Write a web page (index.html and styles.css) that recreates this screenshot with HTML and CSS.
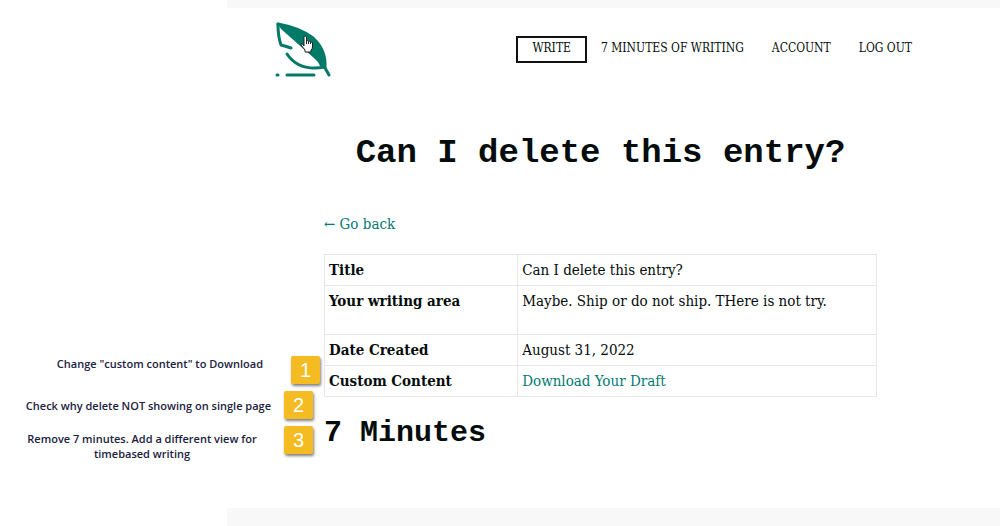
FILE: index.html
```html
<!DOCTYPE html>
<html lang="en">
<head>
    <meta charset="UTF-8">
    <meta name="viewport" content="width=device-width, initial-scale=1.0">
    <title>Can I delete this entry?</title>
    <link rel="stylesheet" href="styles.css">
</head>
<body>
    <div class="site">
        <header class="site-header">
            <a class="logo" href="#" aria-label="Home">
                <svg width="58" height="58" viewBox="0 0 58 58">
                    <!-- leaf -->
                    <path d="M3 3 Q25 7 38 17 Q51 29 50 46 L45 45 Q44 41 40 38 L6 8 Z" fill="#037a68"/>
                    <g fill="none" stroke="#037a68" stroke-width="3" stroke-linecap="round" stroke-linejoin="round">
                        <path d="M3 3 Q25 7 38 17 Q51 29 50 46 Q24 51 12 33"/>
                        <path d="M3 3 Q3 16 6 24 Q10 25 16 27"/>
                        <path d="M49 45 L54 54"/>
                        <path d="M2 54 H3 M12 54 H39"/>
                    </g>
                </svg>
                <svg class="cursor" width="14" height="18" viewBox="0 0 14 18">
                    <path d="M4 11V2Q4 1 5 1T6.500 2V6Q8 5 8.500 6.500Q10 5.500 10.500 7Q12.500 6.500 12.500 8V12Q12.500 14 11 15V17H5V15L1 10Q.5 8.500 2 8.500Z" fill="#fff" stroke="#222" stroke-width="1"/>
                    <path d="M6.500 6V9M8.500 6.500V9M10.500 7V9" stroke="#222" fill="none"/>
                </svg>
            </a>
            <nav class="menu">
                <a class="menu-button" href="#">WRITE</a>
                <a href="#">7 MINUTES OF WRITING</a>
                <a href="#">ACCOUNT</a>
                <a href="#">LOG OUT</a>
            </nav>
        </header>

        <main class="entry">
            <h1>Can I delete this entry?</h1>
            <a class="back" href="#">← Go back</a>
            <table>
                <tr>
                    <th scope="row">Title</th>
                    <td>Can I delete this entry?</td>
                </tr>
                <tr class="writing">
                    <th scope="row">Your writing area</th>
                    <td>Maybe. Ship or do not ship. THere is not try.</td>
                </tr>
                <tr>
                    <th scope="row">Date Created</th>
                    <td>August 31, 2022</td>
                </tr>
                <tr>
                    <th scope="row">Custom Content</th>
                    <td><a href="#">Download Your Draft</a></td>
                </tr>
            </table>
            <h2>7 Minutes</h2>
        </main>
    </div>

    <!-- review notes -->
    <ol class="notes">
        <li class="note-out"><p>Change "custom content" to Download</p><span class="badge">1</span></li>
        <li><p>Check why delete NOT showing on single page</p><span class="badge">2</span></li>
        <li class="note-long"><p>Remove 7 minutes. Add a different view for timebased writing</p><span class="badge">3</span></li>
    </ol>
</body>
</html>
```

FILE: styles.css
```css
* {
    box-sizing: border-box;
}

body {
    margin: 0;
    background: #fff;
    color: #050c0c;
    font-family: "DejaVu Serif Condensed", "DejaVu Serif", serif;
    font-size: 15px;
    line-height: 20px;
}

a {
    color: #037a72;
    text-decoration: none;
}

.site {
    min-height: 100vh;
    margin-left: 227px;
    border-top: 8px solid #f8f8f8;
    border-bottom: 18px solid #f8f8f8;
}

/* header */
.site-header {
    display: flex;
    justify-content: space-between;
    align-items: flex-start;
    padding: 13px 88px 0 48px;
}

.logo {
    position: relative;
    height: 58px;
}

.cursor {
    position: absolute;
    left: 25px;
    top: 14px;
}

.menu {
    display: flex;
    align-items: center;
    gap: 28px;
    margin-top: 15px;
}

.menu a {
    padding-bottom: 3px;
    color: #050c0c;
    font-size: 12px;
}

.menu .menu-button {
    margin-right: -14px;
    padding: 0 14px 3px;
    border: 2px solid #111;
}

/* entry */
.entry {
    padding: 0 123px 0 97px;
}

h1, h2 {
    margin: 0;
    font-family: "Liberation Mono", monospace;
}

h1 {
    margin: 50px 0 37px;
    font-size: 34px;
    line-height: 48px;
    text-align: center;
}

h2 {
    margin-top: 16px;
    font-size: 30px;
    line-height: 40px;
}

.back {
    display: block;
    margin-bottom: 20px;
}

table {
    width: 100%;
    border-collapse: collapse;
}

th, td {
    padding: 5px 4px;
    border: 1px solid #e6e6e6;
    text-align: left;
    vertical-align: top;
}

th {
    width: 35%;
}

.writing td {
    padding-bottom: 23px;
}

/* notes */
.notes {
    position: absolute;
    top: 356px;
    left: 0;
    width: 320px;
    margin: 0;
    padding: 0;
    list-style: none;
    color: #1b2140;
    font-family: "Open Sans", sans-serif;
    font-size: 11px;
    font-weight: 600;
    line-height: 15px;
}

.notes li {
    display: flex;
    justify-content: flex-end;
    align-items: center;
    gap: 13px;
    margin-bottom: 7px;
    padding-right: 7px;
}

.notes p {
    margin: 0;
    text-align: center;
}

.notes .note-out {
    align-items: flex-start;
    gap: 28px;
    padding-right: 0;
}

.notes .note-long {
    align-items: flex-start;
    gap: 26px;
}

.note-long p {
    width: 232px;
    padding-top: 5px;
}

.badge {
    width: 29px;
    height: 28px;
    border-radius: 2px;
    background: #f4bb22;
    box-shadow: 1px 2px 3px rgba(0, 0, 0, 0.5);
    color: #fff;
    font-family: "Liberation Sans", sans-serif;
    font-size: 20px;
    font-weight: normal;
    line-height: 28px;
    text-align: center;
}
```
